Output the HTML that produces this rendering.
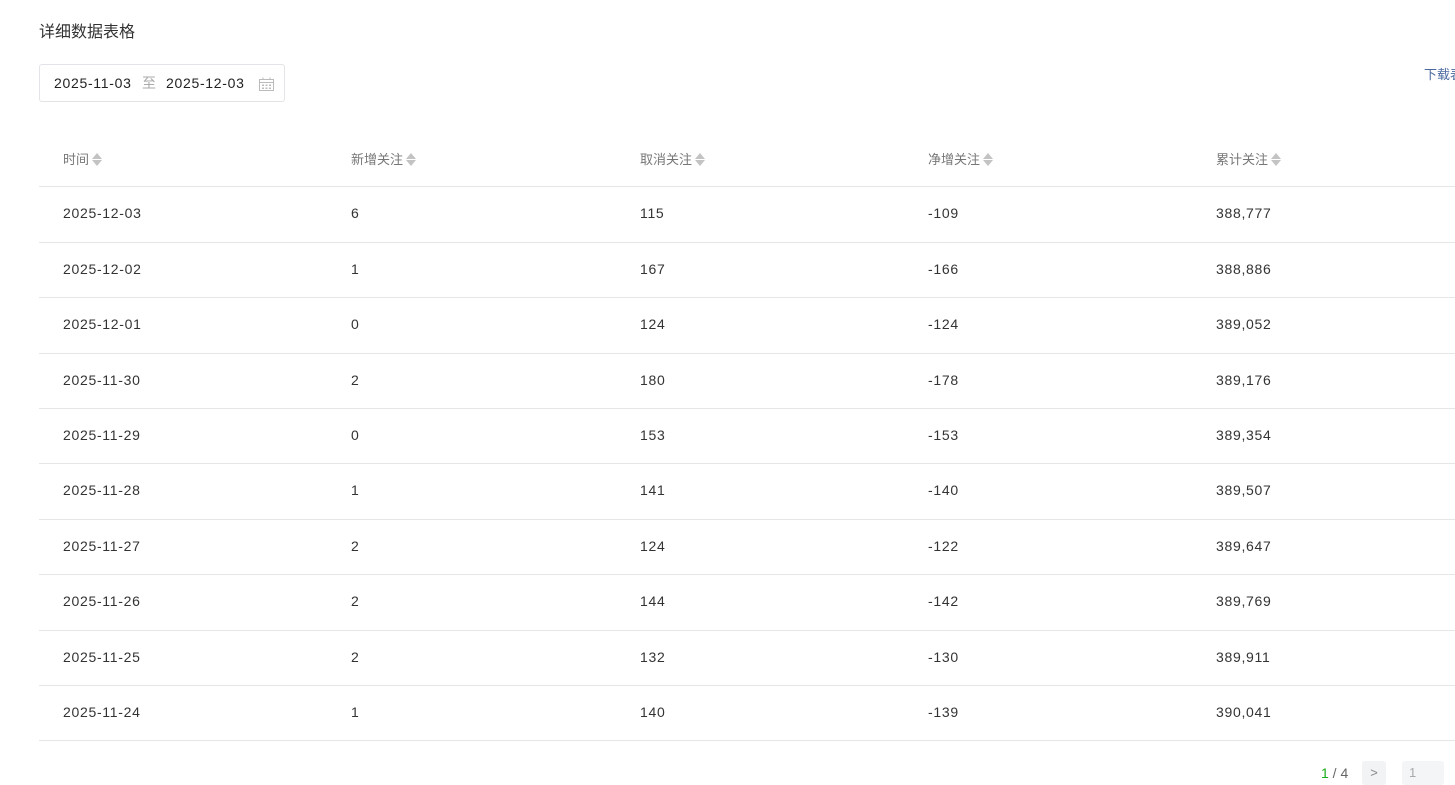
<!DOCTYPE html>
<html><head><meta charset="utf-8"><style>
*{margin:0;padding:0;box-sizing:border-box}
body{width:1455px;height:775px;overflow:hidden;background:#fff;font-family:"Liberation Sans","Noto Sans CJK SC",sans-serif;position:relative;color:#333}
.a{position:absolute;white-space:nowrap}
.title{left:39px;top:22px;font-size:16px;color:#333;line-height:22px}
.date{left:39px;top:64px;width:246px;height:38px;border:1px solid #e2e4e8;border-radius:3px}
.dl{position:absolute;top:0;line-height:36px;font-size:14px;color:#222;letter-spacing:0.7px}
.dl2{color:#aaa}
.line{position:absolute;left:39px;width:1420px;height:1px;background:#e6e6e6}
.h{font-size:13px;color:#777;top:151px;line-height:18px}
.c{font-size:14px;color:#333;line-height:20px;letter-spacing:0.7px}
.sort{display:inline-block;vertical-align:-3px;margin-left:3px;width:10px;height:15px;position:relative}
.sort:before{content:"";position:absolute;left:0;top:1px;border-left:5px solid transparent;border-right:5px solid transparent;border-bottom:6px solid #c3c3c3}
.sort:after{content:"";position:absolute;left:0;top:8px;border-left:5px solid transparent;border-right:5px solid transparent;border-top:6px solid #c3c3c3}
</style></head><body>
<div class="a title">详细数据表格</div>
<div class="a date">
 <span class="dl" style="left:14px">2025-11-03</span>
 <span class="dl dl2" style="left:102px">至</span>
 <span class="dl" style="left:126px">2025-12-03</span>
 <svg style="position:absolute;left:219px;top:12px" width="15" height="14" viewBox="0 0 15 14"><rect x="0.5" y="2.5" width="14" height="11" fill="none" stroke="#bbb"/><line x1="0.5" y1="5.5" x2="14.5" y2="5.5" stroke="#bbb"/><line x1="4" y1="0.5" x2="4" y2="3" stroke="#bbb"/><line x1="11" y1="0.5" x2="11" y2="3" stroke="#bbb"/><g fill="#bbb"><rect x="3" y="7.5" width="2" height="1.5"/><rect x="6.5" y="7.5" width="2" height="1.5"/><rect x="10" y="7.5" width="2" height="1.5"/><rect x="3" y="10.5" width="2" height="1.5"/><rect x="6.5" y="10.5" width="2" height="1.5"/><rect x="10" y="10.5" width="2" height="1.5"/></g></svg>
</div>
<div class="a" style="left:1424px;top:66px;font-size:13px;color:#4a6aa0;line-height:18px">下载表格</div>

<div class="a h" style="left:63px">时间<span class="sort"></span></div>
<div class="a h" style="left:351px">新增关注<span class="sort"></span></div>
<div class="a h" style="left:640px">取消关注<span class="sort"></span></div>
<div class="a h" style="left:928px">净增关注<span class="sort"></span></div>
<div class="a h" style="left:1216px">累计关注<span class="sort"></span></div>

<div class="line" style="top:186px"></div>
<div class="line" style="top:242px"></div>
<div class="line" style="top:297px"></div>
<div class="line" style="top:353px"></div>
<div class="line" style="top:408px"></div>
<div class="line" style="top:463px"></div>
<div class="line" style="top:519px"></div>
<div class="line" style="top:574px"></div>
<div class="line" style="top:630px"></div>
<div class="line" style="top:685px"></div>
<div class="line" style="top:740px"></div>

<div class="a c" style="left:63px;top:203px">2025-12-03</div><div class="a c" style="left:351px;top:203px">6</div><div class="a c" style="left:640px;top:203px">115</div><div class="a c" style="left:928px;top:203px">-109</div><div class="a c" style="left:1216px;top:203px">388,777</div>
<div class="a c" style="left:63px;top:259px">2025-12-02</div><div class="a c" style="left:351px;top:259px">1</div><div class="a c" style="left:640px;top:259px">167</div><div class="a c" style="left:928px;top:259px">-166</div><div class="a c" style="left:1216px;top:259px">388,886</div>
<div class="a c" style="left:63px;top:314px">2025-12-01</div><div class="a c" style="left:351px;top:314px">0</div><div class="a c" style="left:640px;top:314px">124</div><div class="a c" style="left:928px;top:314px">-124</div><div class="a c" style="left:1216px;top:314px">389,052</div>
<div class="a c" style="left:63px;top:370px">2025-11-30</div><div class="a c" style="left:351px;top:370px">2</div><div class="a c" style="left:640px;top:370px">180</div><div class="a c" style="left:928px;top:370px">-178</div><div class="a c" style="left:1216px;top:370px">389,176</div>
<div class="a c" style="left:63px;top:425px">2025-11-29</div><div class="a c" style="left:351px;top:425px">0</div><div class="a c" style="left:640px;top:425px">153</div><div class="a c" style="left:928px;top:425px">-153</div><div class="a c" style="left:1216px;top:425px">389,354</div>
<div class="a c" style="left:63px;top:480px">2025-11-28</div><div class="a c" style="left:351px;top:480px">1</div><div class="a c" style="left:640px;top:480px">141</div><div class="a c" style="left:928px;top:480px">-140</div><div class="a c" style="left:1216px;top:480px">389,507</div>
<div class="a c" style="left:63px;top:536px">2025-11-27</div><div class="a c" style="left:351px;top:536px">2</div><div class="a c" style="left:640px;top:536px">124</div><div class="a c" style="left:928px;top:536px">-122</div><div class="a c" style="left:1216px;top:536px">389,647</div>
<div class="a c" style="left:63px;top:591px">2025-11-26</div><div class="a c" style="left:351px;top:591px">2</div><div class="a c" style="left:640px;top:591px">144</div><div class="a c" style="left:928px;top:591px">-142</div><div class="a c" style="left:1216px;top:591px">389,769</div>
<div class="a c" style="left:63px;top:647px">2025-11-25</div><div class="a c" style="left:351px;top:647px">2</div><div class="a c" style="left:640px;top:647px">132</div><div class="a c" style="left:928px;top:647px">-130</div><div class="a c" style="left:1216px;top:647px">389,911</div>
<div class="a c" style="left:63px;top:702px">2025-11-24</div><div class="a c" style="left:351px;top:702px">1</div><div class="a c" style="left:640px;top:702px">140</div><div class="a c" style="left:928px;top:702px">-139</div><div class="a c" style="left:1216px;top:702px">390,041</div>

<div class="a" style="left:1321px;top:763px;font-size:14px;line-height:20px;color:#666"><span style="color:#1aad19">1</span> / 4</div>
<div class="a" style="left:1362px;top:761px;width:24px;height:24px;background:#f2f3f5;border-radius:3px;color:#888;font-size:13px;text-align:center;line-height:24px">&gt;</div>
<div class="a" style="left:1402px;top:761px;width:42px;height:24px;background:#f4f5f7;border-radius:3px;color:#aaa;font-size:13px;padding-left:7px;line-height:24px">1</div>
</body></html>
